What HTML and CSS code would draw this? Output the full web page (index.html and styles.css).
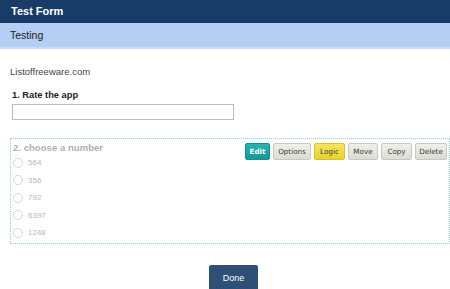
FILE: index.html
```html
<!DOCTYPE html>
<html lang="en">
<head>
    <meta charset="UTF-8">
    <meta name="viewport" content="width=device-width, initial-scale=1.0">
    <title>Test Form</title>
    <link rel="stylesheet" href="styles.css">
</head>
<body>
    <div class="top-bar">Test Form</div>
    <div class="sub-bar">Testing</div>
    <div class="content">
        <p class="site-text">Listoffreeware.com</p>
        <label class="question">1. Rate the app</label>
        <input type="text" class="text-input">
        <div class="question-box">
            <div class="toolbar">
                <button class="tool edit">Edit</button>
                <button class="tool w-options">Options</button>
                <button class="tool logic">Logic</button>
                <button class="tool w-move">Move</button>
                <button class="tool w-copy">Copy</button>
                <button class="tool w-delete">Delete</button>
            </div>
            <div class="box-title">2. choose a number</div>
            <div class="option"><span class="radio"></span>564</div>
            <div class="option"><span class="radio"></span>356</div>
            <div class="option"><span class="radio"></span>792</div>
            <div class="option"><span class="radio"></span>6397</div>
            <div class="option"><span class="radio"></span>1248</div>
        </div>
        <div class="done-row">
            <button class="done">Done</button>
        </div>
    </div>
</body>
</html>
```

FILE: styles.css
```css
body {
    margin: 0;
    font-family: "Liberation Sans", Arial, sans-serif;
    background-color: #ffffff;
    overflow: hidden;
}
.top-bar {
    background-color: #173c68;
    color: #ffffff;
    font-weight: bold;
    font-size: 11px;
    height: 23px;
    line-height: 23px;
    padding-left: 11px;
}
.sub-bar {
    background-color: #b4cff3;
    color: #222222;
    font-size: 10.5px;
    height: 24px;
    line-height: 25px;
    padding-left: 10px;
    border-bottom: 2px solid #c9dcf6;
}
.content {
    padding-left: 10px;
}
.site-text {
    margin: 17px 0 0 0;
    font-size: 9.5px;
    line-height: 12px;
    color: #444444;
}
.question {
    display: block;
    margin: 11px 0 0 2px;
    font-size: 9.3px;
    font-weight: bold;
    line-height: 12px;
    color: #222222;
}
.text-input {
    display: block;
    margin: 3px 0 0 2px;
    width: 222px;
    height: 16px;
    box-sizing: border-box;
    border: 1px solid #bbbbbb;
    padding: 0;
}
.question-box {
    position: relative;
    margin-top: 18px;
    border: 1px dotted #8fd0d9;
    padding: 3px 0 1px 2px;
    height: 106px;
    box-sizing: border-box;
}
.box-title {
    font-size: 9.6px;
    font-weight: bold;
    line-height: 12px;
    color: #b0b0b0;
}
.option {
    display: flex;
    align-items: center;
    height: 17.5px;
    font-size: 8px;
    color: #b8b8b8;
}
.option:first-of-type {
    margin-top: 3px;
}
.radio {
    width: 10px;
    height: 10px;
    border: 1px solid #d8d8d8;
    border-radius: 50%;
    box-sizing: border-box;
    margin-right: 5px;
}
.toolbar {
    position: absolute;
    top: 4px;
    right: 2px;
    display: flex;
    gap: 3px;
}
.tool {
    width: 30px;
    height: 17px;
    padding: 0;
    font-family: "DejaVu Sans", Verdana, sans-serif;
    font-size: 7.2px;
    color: #3a3a3a;
    background: linear-gradient(#f0f0ea, #dcdcd4);
    border: 1px solid #c8c8c0;
    border-radius: 2px;
}
.tool.edit {
    width: 25px;
    background: linear-gradient(#25b3b0, #12999a);
    border-color: #12908f;
    color: #ffffff;
    font-weight: bold;
}
.tool.logic {
    width: 31px;
    background: linear-gradient(#f6e460, #e9d22c);
    border-color: #d9c428;
}
.tool.w-options {
    width: 38px;
}
.tool.w-move {
    width: 30px;
}
.tool.w-copy {
    width: 31px;
}
.tool.w-delete {
    width: 32px;
}
.done-row {
    padding: 21px 0 0 199px;
}
.done {
    width: 49px;
    height: 26px;
    background-color: #2e5077;
    color: #ffffff;
    border: none;
    border-radius: 2px;
    font-family: "Liberation Sans", Arial, sans-serif;
    font-size: 9px;
}
```
